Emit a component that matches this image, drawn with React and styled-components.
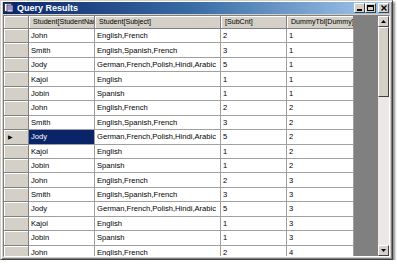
import React from "react";
import styled, { createGlobalStyle } from "styled-components";

const Global = createGlobalStyle`
  body {
    margin: 0;
    background: #ffffff;
    font-family: "Liberation Sans", Arial, sans-serif;
  }
`;

const Window = styled.div`
  width: 393px;
  height: 260px;
  box-sizing: border-box;
  background: #d4d0c8;
  border: 1px solid #404040;
  border-top-color: #d4d0c8;
  border-left-color: #d4d0c8;
  box-shadow: inset 1px 1px 0 #ffffff, inset -1px -1px 0 #808080, 2px 2px 2px rgba(0, 0, 0, 0.45);
  display: flex;
  flex-direction: column;
  padding: 1px 2px 2px 2px;
`;

const TitleBar = styled.div`
  height: 12px;
  flex: none;
  background: linear-gradient(to right, #0a246a 0%, #3a6ea5 50%, #a6caf0 100%);
  display: flex;
  align-items: center;
  padding: 0 1px 0 1px;
`;

const Title = styled.span`
  color: #ffffff;
  font-weight: bold;
  font-size: 9px;
  margin-left: 3px;
  flex: 1;
`;

const TitleButton = styled.div`
  width: 11px;
  height: 10px;
  box-sizing: border-box;
  background: #d4d0c8;
  border: 1px solid;
  border-color: #ffffff #404040 #404040 #ffffff;
  margin-left: ${(p) => (p.$gap ? "2px" : "0")};
  display: flex;
  align-items: center;
  justify-content: center;
`;

const Body = styled.div`
  flex: 1;
  display: flex;
  margin-top: 1px;
  border: 1px solid;
  border-color: #808080 #ffffff #ffffff #808080;
  min-height: 0;
`;

const GridArea = styled.div`
  flex: 1;
  min-width: 0;
  background: #808080;
  overflow: hidden;
`;

const Table = styled.div`
  display: grid;
  grid-template-columns: 25px 66px 126px 66px 67px;
  grid-template-rows: 13px;
  grid-auto-rows: 14.45px;
  width: 350px;
  justify-content: start;
`;

const HeadCell = styled.div`
  background: #d4d0c8;
  box-sizing: border-box;
  min-width: 0;
  border-right: 1px solid #808080;
  border-bottom: 1px solid #808080;
  box-shadow: inset 1px 1px 0 #ffffff;
  font-size: 7.1px;
  color: #000;
  padding-left: 4px;
  white-space: nowrap;
  overflow: hidden;
  line-height: 12px;
`;

const RowHead = styled.div`
  background: #d4d0c8;
  box-sizing: border-box;
  min-width: 0;
  border-right: 1px solid #808080;
  border-bottom: 1px solid #808080;
  box-shadow: inset 1px 1px 0 #ffffff;
  display: flex;
  align-items: center;
  padding-left: 4px;
  font-size: 6px;
`;

const Cell = styled.div`
  box-sizing: border-box;
  min-width: 0;
  background: ${(p) => (p.$sel ? "#0a246a" : "#ffffff")};
  color: ${(p) => (p.$sel ? "#ffffff" : "#000000")};
  border-right: 1px solid #a0a0a0;
  border-bottom: 1px solid #a0a0a0;
  font-size: 7.6px;
  padding-left: 2px;
  white-space: nowrap;
  overflow: hidden;
  display: flex;
  align-items: center;
`;

const ScrollBar = styled.div`
  width: 11px;
  flex: none;
  display: flex;
  flex-direction: column;
  background: #ece9e4;
`;

const Arrow = styled.div`
  height: 11px;
  flex: none;
  box-sizing: border-box;
  background: #d4d0c8;
  border: 1px solid;
  border-color: #ffffff #404040 #404040 #ffffff;
  display: flex;
  align-items: center;
  justify-content: center;
`;

const Thumb = styled.div`
  height: 70px;
  flex: none;
  box-sizing: border-box;
  background: #d4d0c8;
  border: 1px solid;
  border-color: #ffffff #404040 #404040 #ffffff;
`;

const Track = styled.div`
  flex: 1;
`;

const rows = [
  ["John", "English,French", "2", "1"],
  ["Smith", "English,Spanish,French", "3", "1"],
  ["Jody", "German,French,Polish,Hindi,Arabic", "5", "1"],
  ["Kajol", "English", "1", "1"],
  ["Jobin", "Spanish", "1", "1"],
  ["John", "English,French", "2", "2"],
  ["Smith", "English,Spanish,French", "3", "2"],
  ["Jody", "German,French,Polish,Hindi,Arabic", "5", "2"],
  ["Kajol", "English", "1", "2"],
  ["Jobin", "Spanish", "1", "2"],
  ["John", "English,French", "2", "3"],
  ["Smith", "English,Spanish,French", "3", "3"],
  ["Jody", "German,French,Polish,Hindi,Arabic", "5", "3"],
  ["Kajol", "English", "1", "3"],
  ["Jobin", "Spanish", "1", "3"],
  ["John", "English,French", "2", "4"],
];

const SELECTED = 7;

const AppIcon = () => (
  <svg width="10" height="10" viewBox="0 0 10 10">
    <rect x="0.5" y="0.5" width="7" height="8" fill="#ffffff" stroke="#404040" />
    <rect x="3" y="2" width="6" height="7" fill="#c8c8e8" stroke="#202060" strokeWidth="0.8" />
    <line x1="4" y1="4" x2="8" y2="4" stroke="#202060" strokeWidth="0.6" />
    <line x1="4" y1="6" x2="8" y2="6" stroke="#202060" strokeWidth="0.6" />
  </svg>
);

const App = () => {
  return (
    <>
      <Global />
      <Window>
        <TitleBar>
          <AppIcon />
          <Title>Query Results</Title>
          <TitleButton>
            <svg width="6" height="5"><rect x="0" y="3" width="5" height="2" fill="#000" /></svg>
          </TitleButton>
          <TitleButton>
            <svg width="7" height="6"><rect x="0.5" y="0.5" width="6" height="5" fill="none" stroke="#000" /><rect x="0" y="0" width="7" height="2" fill="#000" /></svg>
          </TitleButton>
          <TitleButton $gap>
            <svg width="6" height="6"><path d="M0.5 0.5 L5.5 5.5 M5.5 0.5 L0.5 5.5" stroke="#000" strokeWidth="1.3" /></svg>
          </TitleButton>
        </TitleBar>
        <Body>
          <GridArea>
            <Table>
              <HeadCell />
              <HeadCell>Student[StudentName]</HeadCell>
              <HeadCell>Student[Subject]</HeadCell>
              <HeadCell>[SubCnt]</HeadCell>
              <HeadCell>DummyTbl[Dummy]</HeadCell>
              {rows.map((r, i) => (
                <React.Fragment key={i}>
                  <RowHead>{i === SELECTED ? "▶" : ""}</RowHead>
                  <Cell $sel={i === SELECTED}>{r[0]}</Cell>
                  <Cell>{r[1]}</Cell>
                  <Cell>{r[2]}</Cell>
                  <Cell>{r[3]}</Cell>
                </React.Fragment>
              ))}
            </Table>
          </GridArea>
          <ScrollBar>
            <Arrow>
              <svg width="5" height="3"><path d="M2.5 0 L5 3 L0 3 Z" fill="#000" /></svg>
            </Arrow>
            <Thumb />
            <Track />
            <Arrow>
              <svg width="5" height="3"><path d="M0 0 L5 0 L2.5 3 Z" fill="#000" /></svg>
            </Arrow>
          </ScrollBar>
        </Body>
      </Window>
    </>
  );
};

export default App;
